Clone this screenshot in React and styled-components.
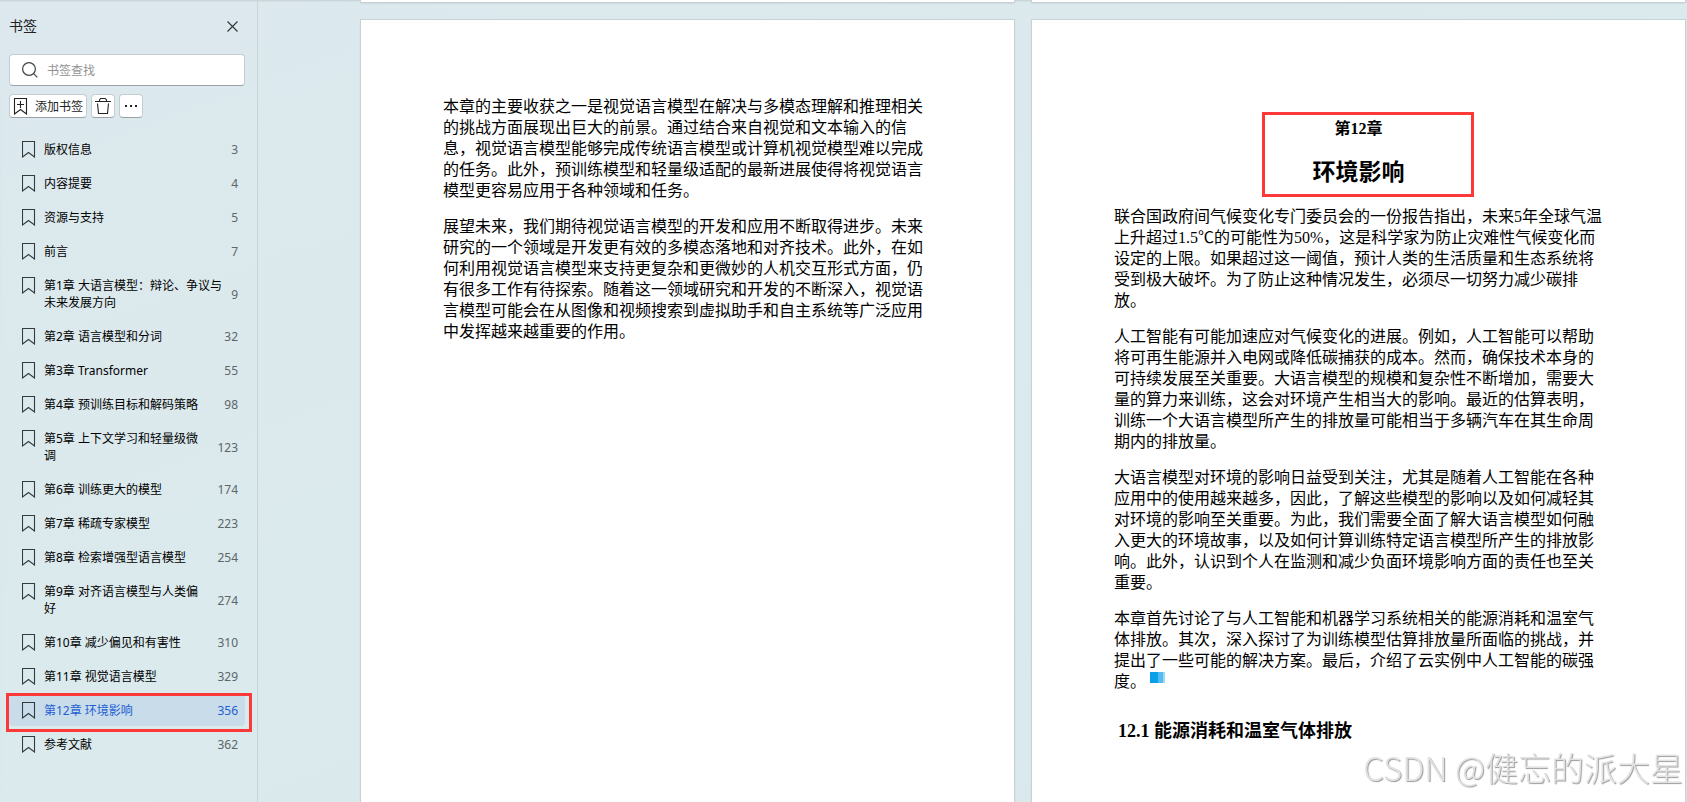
import styled, { createGlobalStyle, css } from 'styled-components';

const GlobalStyle = createGlobalStyle`
  * {
    box-sizing: border-box;
  }
  body {
    margin: 0;
    font-family: 'Noto Sans', 'Noto Sans CJK SC', sans-serif;
    font-size: 12px;
    color: #111;
  }
`;

const Layout = styled.div`
  display: flex;
  height: 100vh;
  overflow: hidden;
  background: linear-gradient(160deg, #dce8ed 0%, #dbeaed 50%, #dae8eb 100%);
  box-shadow: inset 0 2px 2px -1px #c3cfd3;
`;

const Sidebar = styled.aside`
  flex: none;
  width: 258px;
  padding: 14px 12px 0 9px;
  border-right: 1px solid #cbd3d6;
`;

const SidebarHeader = styled.div`
  display: flex;
  align-items: center;
  justify-content: space-between;
  height: 24px;
  padding-right: 7px;
`;

const SidebarTitle = styled.h2`
  margin: 0;
  font-size: 14px;
  font-weight: normal;
  line-height: 24px;
  color: #222;
`;

const CloseButton = styled.button`
  display: flex;
  padding: 0;
  border: 0;
  background: none;
  cursor: pointer;
`;

const SearchBox = styled.label`
  display: flex;
  align-items: center;
  gap: 9px;
  height: 32px;
  margin-top: 16px;
  padding: 0 12px;
  border: 1px solid #c4ced1;
  border-bottom-color: #98a3a6;
  border-radius: 4px;
  background: #fff;
`;

const SearchInput = styled.input`
  flex: 1;
  min-width: 0;
  padding: 0;
  border: 0;
  outline: 0;
  background: none;
  font: inherit;
  &::placeholder {
    color: #929292;
    opacity: 1;
  }
`;

const Toolbar = styled.div`
  display: flex;
  gap: 4px;
  margin-top: 8px;
`;

const ToolButton = styled.button`
  display: flex;
  align-items: center;
  justify-content: center;
  gap: 7px;
  min-width: 24px;
  height: 24px;
  padding: 0 3px;
  border: 1px solid #c4ced1;
  border-bottom-color: #98a3a6;
  border-radius: 4px;
  background: #fff;
  font: inherit;
  color: #222;
  cursor: pointer;
`;

const BookmarkList = styled.ul`
  display: flex;
  flex-direction: column;
  gap: 3px;
  margin: 16px 0 0;
  padding: 0;
  list-style: none;
`;

const mark = css`
  position: relative;
  &::after {
    content: '';
    position: absolute;
    border: 3px solid #fd3838;
    pointer-events: none;
  }
`;

const BookmarkItem = styled.li`
  ${({ $marked }) => $marked && mark}
  &::after {
    inset: -2px -7px -6px -3px;
  }
`;

const BookmarkLink = styled.a`
  display: flex;
  align-items: flex-start;
  padding: 7px 7px 7px 13px;
  border-radius: 4px;
  line-height: 17px;
  text-decoration: none;
  color: ${({ $active }) => ($active ? '#2260d2' : '#000')};
  background: ${({ $active }) => ($active ? '#c8dcea' : 'transparent')};
  svg {
    flex: none;
  }
`;

const BookmarkText = styled.span`
  flex: 1;
  margin: 0 8px;
`;

const PageNumber = styled.span`
  align-self: center;
  color: ${({ $active }) => ($active ? '#2260d2' : '#5d6668')};
`;

const Viewer = styled.main`
  flex: 1;
  display: grid;
  grid-template-columns: 1fr 1fr;
  grid-template-rows: 2px 1fr;
  gap: 18px;
  padding: 0 2px 0 103px;
`;

const Page = styled.article`
  min-width: 0;
  padding: 0 82px;
  background: #fff;
  box-shadow: 0 0 0 1px #c6d2d6, 0 1px 2px #aab8bc;
  font-family: 'Liberation Serif', 'Noto Sans CJK SC', serif;
  font-size: 16px;
  line-height: 21px;
  color: #000;
`;

const TextPage = styled(Page)`
  padding-top: 76px;
`;

const ChapterPage = styled(Page)`
  padding-top: 98px;
`;

const Paragraph = styled.p`
  margin: 0 0 15px;
`;

const ChapterHeader = styled.header`
  ${mark}
  margin-bottom: 17px;
  text-align: center;
  &::after {
    inset: -6px 129px -8px 148px;
  }
`;

const ChapterNumber = styled.div`
  font-weight: bold;
`;

const ChapterTitle = styled.h1`
  margin: 18px 0 0;
  font-size: 23px;
  line-height: 32px;
`;

const SectionTitle = styled.h2`
  margin: 26px 0 0;
  padding-left: 4px;
  font-size: 18px;
  line-height: 26px;
`;

const EndMark = styled.span`
  display: inline-block;
  width: 15px;
  height: 11px;
  margin-left: 4px;
  vertical-align: 4px;
  background: linear-gradient(90deg, #0a9fe9 8px, #52bbf0 8px 13px, #9bd8f7 13px);
`;

const Watermark = styled.div`
  position: fixed;
  right: 4px;
  bottom: 12px;
  font-family: 'Noto Sans CJK SC', sans-serif;
  font-size: 33px;
  font-weight: 300;
  line-height: 46px;
  color: #e2e2e2;
  text-shadow: 1px 1px 1px #999;
  pointer-events: none;
`;

const BookmarkIcon = () => (
  <svg width="14" height="17" viewBox="0 0 14 17" fill="none" stroke="#333c3e">
    <path d="M.5 16V.5h12V16l-6-4.5z" strokeWidth="1.1" />
  </svg>
);

const AddBookmarkIcon = () => (
  <svg width="15" height="17" viewBox="0 0 15 17" fill="none" stroke="#222">
    <path d="M1.5 16V.5h12V16l-6-4.5zM7.5 3v7M4 6.5h7" strokeWidth="1.1" />
  </svg>
);

const SearchIcon = () => (
  <svg width="16" height="16" viewBox="0 0 16 16" fill="none" stroke="#3c4446">
    <circle cx="7" cy="7" r="6.4" strokeWidth="1.2" />
    <path d="M11.6 11.6l3.7 3.7" strokeWidth="1.2" />
  </svg>
);

const TrashIcon = () => (
  <svg width="16" height="18" viewBox="0 0 16 18" fill="none" stroke="#222">
    <path d="M0 4.5h16M4.5 4.5V3l1.2-1.5h4.6L11.5 3v1.5M2.5 6.5l1 10h9l1-10" strokeWidth="1.1" />
  </svg>
);

const MoreIcon = () => (
  <svg width="14" height="4" viewBox="0 0 14 4" fill="#222">
    <path d="M1 1h2v2H1zM6 1h2v2H6zM11 1h2v2h-2z" />
  </svg>
);

const CloseIcon = () => (
  <svg width="11" height="11" viewBox="0 0 11 11" fill="none" stroke="#2c3436">
    <path d="M.5.5l10 10M10.5.5l-10 10" strokeWidth="1.1" />
  </svg>
);

const bookmarks = [
  { title: '版权信息', page: 3 },
  { title: '内容提要', page: 4 },
  { title: '资源与支持', page: 5 },
  { title: '前言', page: 7 },
  { title: '第1章 大语言模型：辩论、争议与未来发展方向', page: 9 },
  { title: '第2章 语言模型和分词', page: 32 },
  { title: '第3章 Transformer', page: 55 },
  { title: '第4章 预训练目标和解码策略', page: 98 },
  { title: '第5章 上下文学习和轻量级微调', page: 123 },
  { title: '第6章 训练更大的模型', page: 174 },
  { title: '第7章 稀疏专家模型', page: 223 },
  { title: '第8章 检索增强型语言模型', page: 254 },
  { title: '第9章 对齐语言模型与人类偏好', page: 274 },
  { title: '第10章 减少偏见和有害性', page: 310 },
  { title: '第11章 视觉语言模型', page: 329 },
  { title: '第12章 环境影响', page: 356 },
  { title: '参考文献', page: 362 },
];

const currentPage = 356;

export default function App() {
  return (
    <>
      <GlobalStyle />
      <Layout>
        <Sidebar>
          <SidebarHeader>
            <SidebarTitle>书签</SidebarTitle>
            <CloseButton aria-label="关闭">
              <CloseIcon />
            </CloseButton>
          </SidebarHeader>
          <SearchBox>
            <SearchIcon />
            <SearchInput type="text" placeholder="书签查找" aria-label="书签查找" />
          </SearchBox>
          <Toolbar>
            <ToolButton>
              <AddBookmarkIcon />
              添加书签
            </ToolButton>
            <ToolButton aria-label="删除书签">
              <TrashIcon />
            </ToolButton>
            <ToolButton aria-label="更多">
              <MoreIcon />
            </ToolButton>
          </Toolbar>
          <BookmarkList>
            {bookmarks.map(({ title, page }) => {
              const active = page === currentPage;
              return (
                <BookmarkItem key={page} $marked={active}>
                  <BookmarkLink href={'#page-' + page} $active={active}>
                    <BookmarkIcon />
                    <BookmarkText>{title}</BookmarkText>
                    <PageNumber $active={active}>{page}</PageNumber>
                  </BookmarkLink>
                </BookmarkItem>
              );
            })}
          </BookmarkList>
        </Sidebar>

        <Viewer>
          <Page />
          <Page />
          <TextPage>
            <Paragraph>
              本章的主要收获之一是视觉语言模型在解决与多模态理解和推理相关的挑战方面展现出巨大的前景。通过结合来自视觉和文本输入的信息，视觉语言模型能够完成传统语言模型或计算机视觉模型难以完成的任务。此外，预训练模型和轻量级适配的最新进展使得将视觉语言模型更容易应用于各种领域和任务。
            </Paragraph>
            <Paragraph>
              展望未来，我们期待视觉语言模型的开发和应用不断取得进步。未来研究的一个领域是开发更有效的多模态落地和对齐技术。此外，在如何利用视觉语言模型来支持更复杂和更微妙的人机交互形式方面，仍有很多工作有待探索。随着这一领域研究和开发的不断深入，视觉语言模型可能会在从图像和视频搜索到虚拟助手和自主系统等广泛应用中发挥越来越重要的作用。
            </Paragraph>
          </TextPage>
          <ChapterPage id="page-356">
            <ChapterHeader>
              <ChapterNumber>第12章</ChapterNumber>
              <ChapterTitle>环境影响</ChapterTitle>
            </ChapterHeader>
            <Paragraph>
              联合国政府间气候变化专门委员会的一份报告指出，未来5年全球气温上升超过1.5℃的可能性为50%，这是科学家为防止灾难性气候变化而设定的上限。如果超过这一阈值，预计人类的生活质量和生态系统将受到极大破坏。为了防止这种情况发生，必须尽一切努力减少碳排放。
            </Paragraph>
            <Paragraph>
              人工智能有可能加速应对气候变化的进展。例如，人工智能可以帮助将可再生能源并入电网或降低碳捕获的成本。然而，确保技术本身的可持续发展至关重要。大语言模型的规模和复杂性不断增加，需要大量的算力来训练，这会对环境产生相当大的影响。最近的估算表明，训练一个大语言模型所产生的排放量可能相当于多辆汽车在其生命周期内的排放量。
            </Paragraph>
            <Paragraph>
              大语言模型对环境的影响日益受到关注，尤其是随着人工智能在各种应用中的使用越来越多，因此，了解这些模型的影响以及如何减轻其对环境的影响至关重要。为此，我们需要全面了解大语言模型如何融入更大的环境故事，以及如何计算训练特定语言模型所产生的排放影响。此外，认识到个人在监测和减少负面环境影响方面的责任也至关重要。
            </Paragraph>
            <Paragraph>
              本章首先讨论了与人工智能和机器学习系统相关的能源消耗和温室气体排放。其次，深入探讨了为训练模型估算排放量所面临的挑战，并提出了一些可能的解决方案。最后，介绍了云实例中人工智能的碳强度。
              <EndMark />
            </Paragraph>
            <SectionTitle>12.1 能源消耗和温室气体排放</SectionTitle>
          </ChapterPage>
        </Viewer>
        <Watermark>CSDN @健忘的派大星</Watermark>
      </Layout>
    </>
  );
}
